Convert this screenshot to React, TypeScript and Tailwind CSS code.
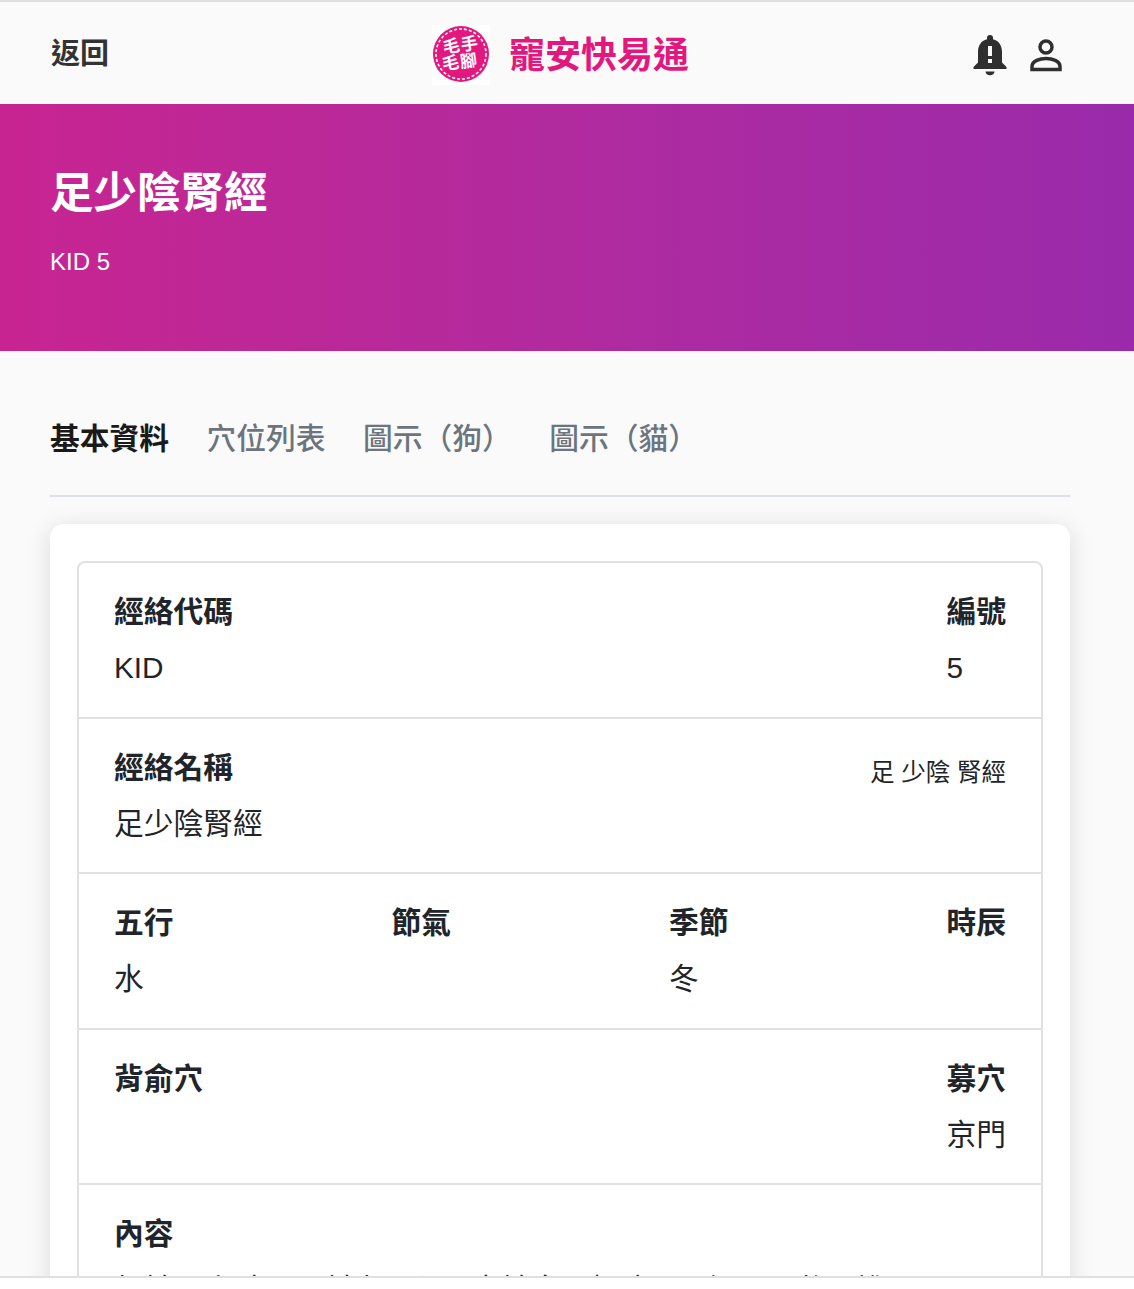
const font = "font-['Liberation_Sans','Noto_Sans_CJK_TC',sans-serif]";

function Logo() {
  return (
    <svg width="58" height="60" viewBox="0 0 58 60" className="bg-white">
      <circle cx="29" cy="29" r="28" fill="#e2187f" />
      <circle cx="29" cy="29" r="25" fill="none" stroke="#fff" strokeWidth="1.6" strokeDasharray="3 2" />
      <circle cx="29" cy="29" r="21.5" fill="#e2187f" />
      <g fill="#fff" fontSize="17" fontWeight="700" fontFamily="Noto Sans CJK TC">
        <text x="11" y="27" transform="rotate(-8 20 22)">毛</text>
        <text x="29" y="25" transform="rotate(-8 36 20)">手</text>
        <text x="10" y="44" transform="rotate(-8 18 38)">毛</text>
        <text x="28" y="42" transform="rotate(-8 35 36)">腳</text>
      </g>
    </svg>
  );
}

function Bell() {
  return (
    <svg width="36" height="44" viewBox="0 0 36 44" fill="#2f2f2f">
      <path d="M18 1a3 3 0 0 0-3 3v1.300C8.800 6.800 6 12 6 18v10.500L1.500 33v2h33v-2L30 28.500V18c0-6-2.800-11.200-9-12.700V4a3 3 0 0 0-3-3z" />
      <path d="M13.500 37.500h9a4.500 3.800 0 0 1-9 0z" />
      <rect x="16" y="12" width="4" height="10" fill="#fafafa" />
      <rect x="16" y="25" width="4" height="4" fill="#fafafa" />
    </svg>
  );
}

function Person() {
  return (
    <svg width="36" height="36" viewBox="0 0 36 36" fill="none" stroke="#2f2f2f" strokeWidth="3.5">
      <circle cx="18" cy="9" r="6" />
      <path d="M4 31.500v-3C4 23 12 20.500 18 20.500s14 2.500 14 8v3z" />
    </svg>
  );
}

function Cell({ label, value }: { label: string; value?: string }) {
  return (
    <div className="flex flex-col">
      <div className="text-[29.750px] leading-[44px] font-semibold text-[#212529]">{label}</div>
      {value && <div className="mt-[12px] text-[29.750px] leading-[44px] text-[#212529]">{value}</div>}
    </div>
  );
}

export default function App() {
  const tabs = ["穴位列表", "圖示（狗）", "圖示（貓）"];

  return (
    <div className={`${font} h-[1289px] bg-white`}>
      <div className="h-[1278px] overflow-hidden bg-[#fafafa] border-t-2 border-b-2 border-[#e0e0e0]">
        <header className="h-[102px] flex items-center justify-between pl-[51px] pr-[70px]">
          <div className="text-[29px] font-semibold text-[#333] mt-[4px]">返回</div>
          <div className="flex items-center gap-[19px] ml-[40px] mt-[4px]">
            <Logo />
            <span className="text-[36px] font-semibold leading-none text-[#e2187f] mt-[2px]">寵安快易通</span>
          </div>
          <div className="flex items-center gap-[20px] mt-[5px]">
            <Bell />
            <Person />
          </div>
        </header>

        <section className="h-[247px] bg-gradient-to-r from-[#c82491] to-[#9a2aab] pl-[50px] pt-[60px] text-white">
          <h1 className="text-[43.500px] leading-[58px] font-bold">足少陰腎經</h1>
          <p className="mt-[26px] text-[24px] leading-[28px]">KID 5</p>
        </section>

        <nav className="ml-[50px] mr-[64px] mt-[54px] h-[92px] flex gap-[37.500px] border-b-2 border-[#dee2e6] text-[29.750px] leading-[68px] font-medium text-[#6c757d]">
          <span className="font-bold text-[#1a1a1a]">基本資料</span>
          {tabs.map((t) => (
            <span key={t} className="whitespace-nowrap">{t}</span>
          ))}
        </nav>

        <main className="ml-[50px] mr-[64px] mt-[27px] bg-white rounded-[14px] shadow-[0_4px_24px_rgba(0,0,0,0.13)] px-[27px] pt-[37px] pb-[40px]">
          <div className="border-2 border-[#e0e0e0] rounded-[8px]">
            <div className="h-[156px] border-b-2 border-[#e0e0e0] px-[35px] pt-[27px] flex justify-between">
              <Cell label="經絡代碼" value="KID" />
              <Cell label="編號" value="5" />
            </div>
            <div className="h-[155px] border-b-2 border-[#e0e0e0] px-[35px] pt-[27px] flex justify-between">
              <Cell label="經絡名稱" value="足少陰腎經" />
              <div className="mt-[5px] text-[24.500px] leading-[44px] text-[#212529]">足 少陰 腎經</div>
            </div>
            <div className="h-[156px] border-b-2 border-[#e0e0e0] px-[35px] pt-[27px] flex justify-between">
              <Cell label="五行" value="水" />
              <Cell label="節氣" />
              <Cell label="季節" value="冬" />
              <Cell label="時辰" />
            </div>
            <div className="h-[155px] border-b-2 border-[#e0e0e0] px-[35px] pt-[27px] flex justify-between">
              <Cell label="背俞穴" />
              <Cell label="募穴" value="京門" />
            </div>
            <div className="px-[35px] pt-[27px]">
              <Cell label="內容" value="起於足小趾下，斜走足心，出於舟骨粗隆下，沿內踝後，進入足跟" />
            </div>
          </div>
        </main>
      </div>
    </div>
  );
}
